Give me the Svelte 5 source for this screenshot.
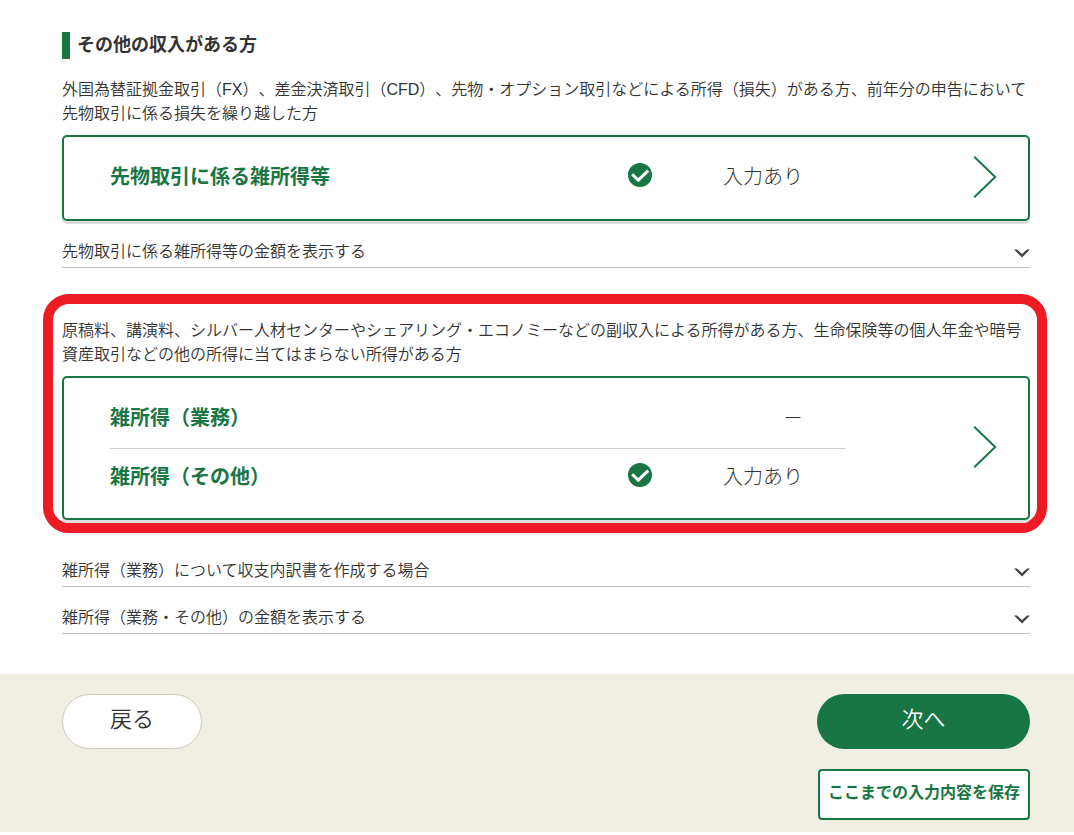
<script lang="ts">
  interface Item {
    label: string;
    entered: boolean;
  }

  const futures: Item[] = [{ label: '先物取引に係る雑所得等', entered: true }];

  const miscellaneous: Item[] = [
    { label: '雑所得（業務）', entered: false },
    { label: '雑所得（その他）', entered: true }
  ];
</script>

{#snippet card(items: Item[])}
  <button class="card" type="button">
    <span class="rows">
      {#each items as item}
        <span class="row">
          <span class="label">{item.label}</span>
          {#if item.entered}
            <svg class="check" viewBox="0 0 24 24" aria-hidden="true">
              <circle cx="12" cy="12" r="12" fill="#187644" />
              <path d="M4.2 11.2L10.3 17.2L20.2 7.6" fill="none" stroke="#fff" stroke-width="3" />
            </svg>
          {/if}
          <span class="status">{item.entered ? '入力あり' : '－'}</span>
        </span>
      {/each}
    </span>
    <svg class="arrow" viewBox="0 0 24 42" aria-hidden="true">
      <path d="M1.2 0.8L22.2 21L1.2 41.2" fill="none" stroke="#187644" stroke-width="2" />
    </svg>
  </button>
{/snippet}

{#snippet accordion(title: string)}
  <button class="accordion" type="button" aria-expanded="false">
    <span>{title}</span>
    <svg class="chevron" viewBox="0 0 16 9" aria-hidden="true">
      <path d="M0 0.5H3L8 5L13 0.5H16L8 8.5Z" fill="#444" />
    </svg>
  </button>
{/snippet}

<main class="content">
  <h2 class="heading">その他の収入がある方</h2>

  <p class="lead">
    外国為替証拠金取引（FX）、差金決済取引（CFD）、先物・オプション取引などによる所得（損失）がある方、前年分の申告において先物取引に係る損失を繰り越した方
  </p>
  {@render card(futures)}
  {@render accordion('先物取引に係る雑所得等の金額を表示する')}

  <section class="highlight">
    <p class="lead">
      原稿料、講演料、シルバー人材センターやシェアリング・エコノミーなどの副収入による所得がある方、生命保険等の個人年金や暗号資産取引などの他の所得に当てはまらない所得がある方
    </p>
    {@render card(miscellaneous)}
  </section>

  <div class="details">
    {@render accordion('雑所得（業務）について収支内訳書を作成する場合')}
    {@render accordion('雑所得（業務・その他）の金額を表示する')}
  </div>
</main>

<footer class="footer">
  <button class="back" type="button">戻る</button>
  <div class="actions">
    <button class="next" type="button">次へ</button>
    <button class="save" type="button">ここまでの入力内容を保存</button>
  </div>
</footer>

<style>
  :global(body) {
    margin: 0;
    background: #fff;
    color: #333;
    font-family: 'Liberation Sans', 'Noto Sans CJK JP', sans-serif;
    font-size: 16px;
    font-weight: 350;
    line-height: 24px;
    text-spacing-trim: space-all;
  }

  button {
    box-sizing: border-box;
    margin: 0;
    font: inherit;
    color: inherit;
    cursor: pointer;
  }

  .content {
    padding: 32px 44px 40px 62px;
  }

  .heading {
    margin: 0 0 19px;
    padding-left: 7px;
    border-left: 8px solid #187644;
    font-size: 18px;
    font-weight: 700;
    line-height: 27px;
  }

  .lead {
    margin: 0 0 9px;
  }

  .card {
    display: flex;
    width: 100%;
    min-height: 86px;
    padding: 12px 31px 11px 46px;
    background: #fff;
    border: 2px solid #187644;
    border-radius: 5px;
    box-shadow: 0 3px 0 #ddd;
    font-size: 20px;
    line-height: 30px;
    text-align: left;
  }

  .rows {
    flex: 1;
  }

  .row {
    display: flex;
    align-items: center;
    padding: 13px 43px 15px 0;
  }

  .row + .row {
    border-top: 1px solid #ccc;
  }

  .label {
    flex: 1;
    color: #187644;
    font-weight: 700;
  }

  .check {
    width: 24px;
    height: 24px;
    margin-bottom: 4px;
  }

  .status {
    width: 151px;
    font-weight: 300;
    text-align: right;
  }

  .arrow {
    align-self: center;
    width: 24px;
    height: 42px;
    margin: 0 0 3px 127px;
  }

  .accordion {
    display: flex;
    align-items: center;
    justify-content: space-between;
    width: 100%;
    margin-top: 19px;
    padding: 0 0 3px;
    background: none;
    border: 0;
    border-bottom: 1px solid #c4bdb3;
    text-align: left;
  }

  .chevron {
    width: 16px;
    height: 9px;
    margin-top: 2px;
  }

  .highlight {
    margin: 26px -17px 26px -19px;
    padding: 15px 7px 3px 9px;
    border: 10px solid #ed1c24;
    border-radius: 26px;
  }

  .details .accordion:first-child {
    margin-top: 0;
  }

  .footer {
    display: flex;
    align-items: flex-start;
    justify-content: space-between;
    padding: 20px 44px 12px 62px;
    background: #f1eee3;
  }

  .back,
  .next {
    height: 55px;
    padding: 0 0 3px;
    border-radius: 28px;
    font-size: 22px;
  }

  .back {
    width: 140px;
    background: #fff;
    border: 1px solid #d0c9be;
  }

  .actions {
    display: flex;
    flex-direction: column;
    align-items: flex-end;
    gap: 20px;
  }

  .next {
    width: 213px;
    background: #187644;
    border: 0;
    color: #fff;
  }

  .save {
    height: 51px;
    padding: 0 8px 3px;
    background: #fff;
    border: 2px solid #187644;
    border-radius: 4px;
    color: #187644;
    font-weight: 700;
  }
</style>
